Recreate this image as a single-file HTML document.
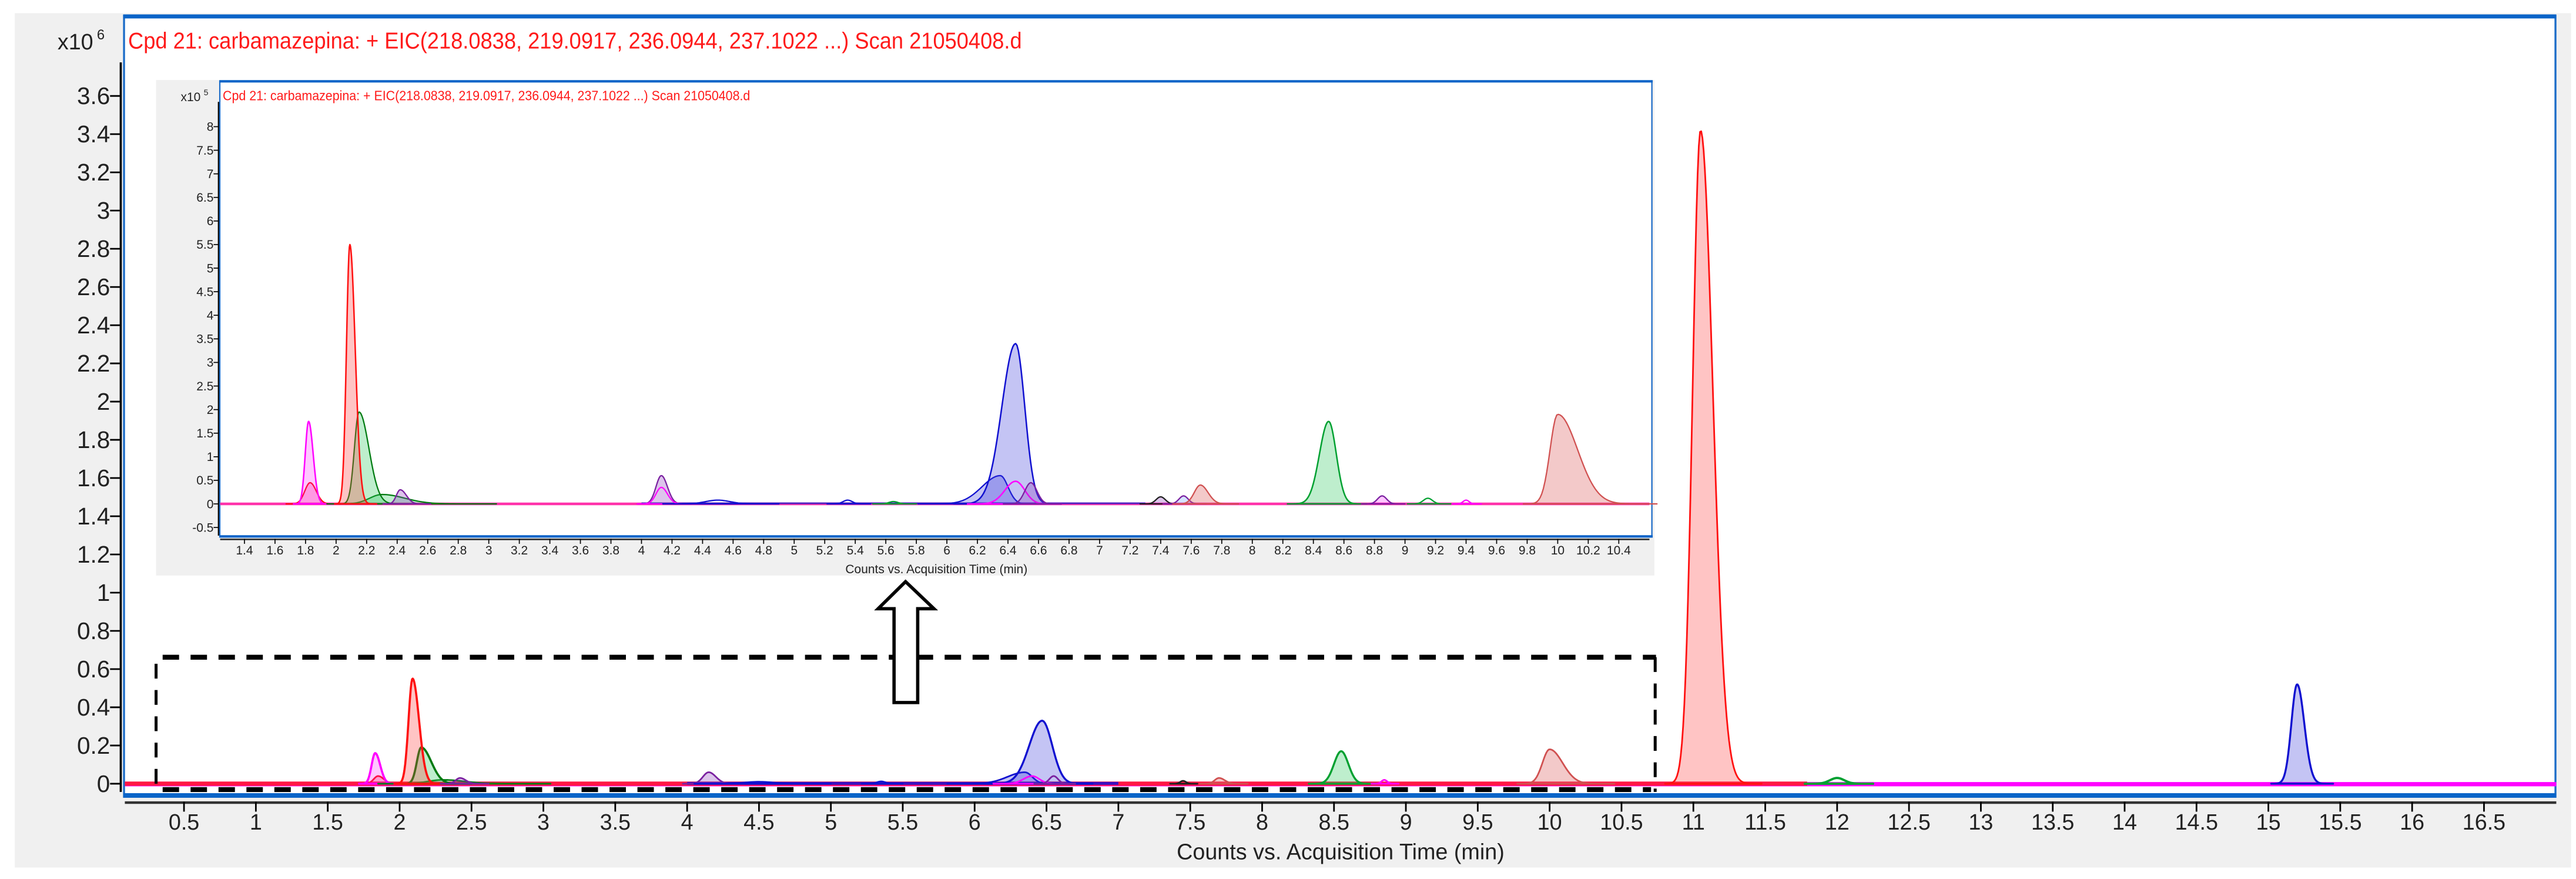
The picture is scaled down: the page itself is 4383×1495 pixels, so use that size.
<!DOCTYPE html>
<html><head><meta charset="utf-8">
<style>
html,body{margin:0;padding:0;background:#fff;}
svg{display:block;}
text{font-family:"Liberation Sans",Arial,sans-serif;}
</style></head>
<body>
<svg id="s" width="4383" height="1495" viewBox="0 0 1568 535" preserveAspectRatio="none" xmlns="http://www.w3.org/2000/svg">
<rect x="0" y="0" width="1568" height="535" fill="#fff"/>
<rect x="9" y="8" width="1556" height="520" fill="#f0f0f0"/>
<rect x="75" y="9" width="1481" height="476" fill="#fff"/>
<rect x="75.5" y="9.5" width="1480" height="475.5" fill="none" stroke="#1c6cc8" stroke-width="1.2"/>
<line x1="75" y1="10" x2="1556" y2="10" stroke="#0a64c8" stroke-width="2.5"/>
<line x1="75" y1="484" x2="1556" y2="484" stroke="#0a64c8" stroke-width="2.5"/>
<line x1="73.5" y1="38" x2="73.5" y2="482" stroke="#000" stroke-width="1.3"/>
<line x1="76" y1="488.5" x2="1556" y2="488.5" stroke="#333" stroke-width="1.6"/>
<text x="78" y="29.5" font-size="14" fill="#ff1a1a" textLength="544" lengthAdjust="spacingAndGlyphs">Cpd 21: carbamazepina: + EIC(218.0838, 219.0917, 236.0944, 237.1022 ...) Scan 21050408.d</text>
<text x="35" y="30" font-size="13.5" fill="#222">x10</text><text x="59" y="24" font-size="8.5" fill="#222">6</text>
<g id="myl" font-size="14.5" fill="#222" text-anchor="end"></g>
<g id="mxl" font-size="13.5" fill="#222" text-anchor="middle"></g>
<text x="816" y="523" font-size="13.5" fill="#222" text-anchor="middle">Counts vs. Acquisition Time (min)</text>
<g id="mticks" stroke="#000" stroke-width="1"></g>
<g id="mpeaks"></g>

<rect x="95" y="48.7" width="912" height="301.6" fill="#f0f0f0"/>
<rect x="133.5" y="49" width="872" height="278" fill="#fff"/>
<rect x="133.8" y="49.3" width="871.7" height="277.5" fill="none" stroke="#1c6cc8" stroke-width="0.8"/>
<line x1="133.5" y1="49.5" x2="1006" y2="49.5" stroke="#0a64c8" stroke-width="1.5"/>
<line x1="133.5" y1="326.5" x2="1006" y2="326.5" stroke="#0a64c8" stroke-width="1.5"/>
<line x1="133" y1="62" x2="133" y2="326" stroke="#000" stroke-width="0.8"/>
<line x1="134" y1="328.3" x2="1004" y2="328.3" stroke="#333" stroke-width="1"/>
<text x="135.6" y="61" font-size="8.3" fill="#ff1a1a" textLength="321" lengthAdjust="spacingAndGlyphs">Cpd 21: carbamazepina: + EIC(218.0838, 219.0917, 236.0944, 237.1022 ...) Scan 21050408.d</text>
<text x="110" y="61.5" font-size="7.5" fill="#222">x10</text><text x="124" y="58" font-size="5" fill="#222">5</text>
<g id="iyl" font-size="7.5" fill="#222" text-anchor="end"></g>
<g id="ixl" font-size="7.5" fill="#222" text-anchor="middle"></g>
<text x="570" y="349" font-size="7.5" fill="#222" text-anchor="middle">Counts vs. Acquisition Time (min)</text>
<g id="iticks" stroke="#000" stroke-width="0.6"></g>
<g id="ipeaks"></g>

<g stroke="#000" stroke-width="3" fill="none">
<line x1="99" y1="400" x2="1008" y2="400" stroke-dasharray="10 7"/>
<line x1="99" y1="480.6" x2="1005" y2="480.6" stroke-dasharray="10 7"/>
<line x1="95" y1="404" x2="95" y2="482" stroke-width="1.8" stroke-dasharray="9 7"/>
<line x1="1007.5" y1="400" x2="1007.5" y2="482" stroke-width="1.8" stroke-dasharray="9 7"/>
</g>
<path d="M551.2,354 L568.5,370.5 L558.6,370.5 L558.6,427.6 L544.2,427.6 L544.2,370.5 L534.5,370.5 Z" fill="#fff" stroke="#000" stroke-width="2"/>
</svg>
<script>
(function(){
var NS="http://www.w3.org/2000/svg";
function el(p,t,a,txt){var e=document.createElementNS(NS,t);for(var k in a)e.setAttribute(k,a[k]);if(txt!=null)e.textContent=txt;document.getElementById(p).appendChild(e);return e;}
function fmt(v){return (Math.round(v*10)/10).toString();}
var mx=function(t){return 112+(t-0.5)*87.5;}, my=function(v){return 477-v*116.28;};
for(var i=0;i<=18;i++){var v=i*0.2,y=my(v);el("mticks","line",{x1:67,y1:y,x2:73.5,y2:y});el("myl","text",{x:67,y:y+5},fmt(v));}
for(var t=0.5;t<=16.51;t+=0.5){var x=mx(t);el("mticks","line",{x1:x,y1:488,x2:x,y2:494});el("mxl","text",{x:x,y:505},fmt(t));}
var ix=function(t){return 148.8+(t-1.4)*92.95;}, iy=function(v){return 306.7-v*28.7;};
for(var v=-0.5;v<=8.01;v+=0.5){var y=iy(v);el("iticks","line",{x1:130,y1:y,x2:133,y2:y});el("iyl","text",{x:130,y:y+2.6},fmt(v));}
for(var k=0;k<=46;k++){var t=1.2+k*0.2,x=ix(t);if(x<134)continue;el("iticks","line",{x1:x,y1:328,x2:x,y2:331});if(t>=1.39&&t<10.5)el("ixl","text",{x:x,y:337.5},fmt(t));}
function peak(g,X,Y,c,h,sl,sr,col,fill,w){
 var t0=c-4.5*sl,t1=c+5*sr,n=80,pts=[];
 for(var i=0;i<=n;i++){var t=t0+(t1-t0)*i/n,s=t<c?sl:sr,v=h*Math.exp(-0.5*Math.pow((t-c)/s,2));pts.push(X(t).toFixed(2)+","+Y(v).toFixed(2));}
 el(g,"path",{d:"M"+X(t0)+","+Y(0)+" L"+pts.join(" L")+" L"+X(t1)+","+Y(0)+"Z",fill:fill||"none",stroke:col,"stroke-width":w||1,"stroke-linejoin":"round"});
}
var R="#ff1010",RF="rgba(255,60,60,0.3)",B="#1010d0",BF="rgba(60,60,220,0.3)",G="#00a030",GF="rgba(40,200,90,0.3)",DG="#007a10",M="#ff00ff",MF="rgba(255,0,255,0.22)",P="#7a20a0",PF="rgba(140,60,190,0.3)",BR="#d05050",BRF="rgba(220,100,100,0.35)",K="#202020";
el("mpeaks","line",{x1:76,y1:477.3,x2:1556,y2:477.3,stroke:"#ff00ff","stroke-width":2.6});
el("mpeaks","line",{x1:76,y1:477,x2:1100,y2:477,stroke:"#ff1744","stroke-width":2.6});
el("mpeaks","line",{x1:mx(4.0),y1:476.8,x2:mx(7.0),y2:476.8,stroke:"#3a10c0","stroke-width":1.8});
var MP=[[1.85,0.04,0.03,0.04,R,RF,1],[1.83,0.16,0.025,0.035,M,MF,1.3],[2.3,0.02,0.1,0.15,DG,null,1],[2.15,0.19,0.03,0.07,DG,GF,1.3],[2.09,0.55,0.028,0.045,R,RF,1.3],[2.42,0.03,0.03,0.04,P,PF,1],
[4.15,0.06,0.04,0.05,P,PF,1],[4.5,0.01,0.1,0.1,B,null,1],[5.35,0.012,0.03,0.03,B,null,1],[6.35,0.06,0.12,0.05,B,BF,1],[6.47,0.33,0.09,0.07,B,BF,1.2],[6.4,0.04,0.06,0.05,M,null,1],[6.55,0.04,0.03,0.03,P,null,1],
[7.45,0.015,0.02,0.02,K,null,1],[7.7,0.03,0.03,0.04,BR,BRF,1],[8.55,0.17,0.05,0.05,G,GF,1.2],[8.85,0.02,0.02,0.02,M,null,1],[10.0,0.18,0.05,0.09,BR,BRF,1],
[11.05,3.42,0.055,0.085,R,RF,1],[12.0,0.03,0.05,0.05,G,null,1.4],[15.2,0.52,0.04,0.05,B,BF,1.2]];
MP.forEach(function(p){peak("mpeaks",mx,my,p[0],p[1],p[2],p[3],p[4],p[5],p[6]);});
el("ipeaks","line",{x1:134,y1:306.7,x2:1004,y2:306.7,stroke:"#ff33aa","stroke-width":1.6});
el("ipeaks","line",{x1:ix(4.0),y1:306.3,x2:ix(7.3),y2:306.3,stroke:"#5020c0","stroke-width":1});
var IP=[[1.83,0.45,0.035,0.04,R,"rgba(255,60,140,0.3)",0.8],[1.82,1.75,0.022,0.03,M,MF,0.9],[2.3,0.2,0.08,0.15,DG,GF,0.8],[2.15,1.95,0.03,0.065,DG,GF,0.8],[2.09,5.5,0.022,0.035,R,RF,0.9],[2.42,0.3,0.025,0.04,P,PF,0.8],
[4.13,0.6,0.035,0.04,P,PF,0.8],[4.13,0.35,0.035,0.04,M,null,0.8],[4.5,0.08,0.08,0.08,B,null,0.8],[5.35,0.08,0.03,0.03,B,null,0.8],[5.65,0.05,0.03,0.03,G,null,0.8],
[6.35,0.6,0.12,0.05,B,BF,0.8],[6.45,3.4,0.09,0.06,B,BF,0.9],[6.45,0.48,0.07,0.06,M,null,0.9],[6.55,0.45,0.04,0.04,P,PF,0.8],
[7.4,0.15,0.03,0.03,K,PF,0.8],[7.55,0.17,0.03,0.03,P,"rgba(120,160,255,0.3)",0.8],[7.66,0.4,0.04,0.05,BR,BRF,0.8],[8.5,1.75,0.06,0.05,G,GF,0.9],
[8.85,0.17,0.03,0.03,P,MF,0.8],[9.15,0.12,0.03,0.03,G,null,0.8],[9.4,0.08,0.02,0.02,M,null,0.8],[10.0,1.9,0.05,0.13,BR,BRF,0.8]];
IP.forEach(function(p){peak("ipeaks",ix,iy,p[0],p[1],p[2],p[3],p[4],p[5],p[6]);});
})();
</script>
</body></html>
